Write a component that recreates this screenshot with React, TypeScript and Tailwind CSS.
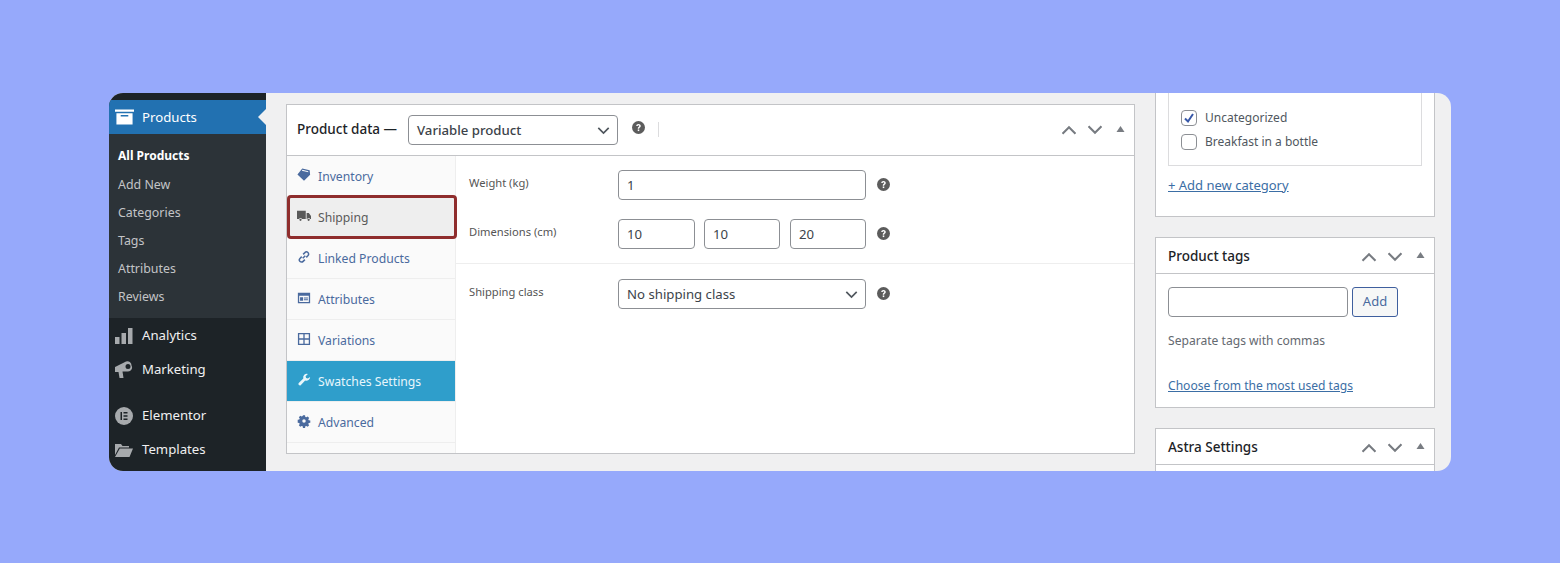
import type { ReactNode } from "react";

const font = { fontFamily: '"Noto Sans", "Open Sans", sans-serif' };

const Chevron = ({ up = false, className = "" }: { up?: boolean; className?: string }) => (
  <svg viewBox="0 0 16 10" className={className} fill="none" stroke="currentColor" strokeWidth={2.1}>
    <path d={up ? "M1.500 8.800 8 2.300l6.500 6.500" : "M1.500 1.200 8 7.700l6.500-6.500"} />
  </svg>
);

const BoxControls = () => (
  <div className="flex items-center text-[#787c82]">
    <Chevron up className="h-[10px] w-[16px]" />
    <Chevron className="ml-[10px] h-[10px] w-[16px]" />
    <svg viewBox="0 0 8 6" className="ml-[13px] mb-[3px] h-[6px] w-[9px]" fill="currentColor">
      <path d="M4 0l4 6H0z" />
    </svg>
  </div>
);

const Help = () => (
  <svg viewBox="0 0 12 12" className="h-[13px] w-[13px]">
    <circle cx="6" cy="6" r="6" fill="#5c5c5c" />
    <path d="M3.900 4.600C3.900 3.400 4.800 2.700 6 2.700s2.100.7 2.100 1.800c0 1.500-1.500 1.400-1.500 2.600H5.300c0-1.800 1.400-1.700 1.400-2.500 0-.4-.3-.7-.7-.7s-.7.3-.8.7z" fill="#fff" />
    <rect x="5.300" y="7.800" width="1.400" height="1.500" fill="#fff" />
  </svg>
);

const tabIcons: Record<string, ReactNode> = {
  Inventory: (
    <path
      fillRule="evenodd"
      d="M6 .5l8.500 2.200.5 5-7 7L.5 7.500zM5.500 3l7.500 1.800-.3-1.200-6.500-1.600z"
    />
  ),
  Shipping: <path d="M0 2h10v9.500H5.700a1.700 1.700 0 0 0-3.300 0H0zM11 4.500h2.500L16 8v3.500h-1a1.700 1.700 0 0 0-3.300 0H11zM4 11a1.300 1.300 0 1 1 0 2.600A1.300 1.300 0 0 1 4 11zM13.300 11a1.300 1.300 0 1 1 0 2.600 1.300 1.300 0 0 1 0-2.600z" />,
  "Linked Products": (
    <path
      fill="none"
      stroke="currentColor"
      strokeWidth={1.7}
      d="M6.500 9.500l3-3M7 5l2-2a2.400 2.400 0 0 1 3.600 3.400l-2 2M9 11l-2 2A2.400 2.400 0 0 1 3.400 9.600l2-2"
    />
  ),
  Attributes: <path fillRule="evenodd" d="M1 2h14v12H1zM2.500 5.500V12.500h11V5.500zM3.500 7h3.500v4H3.500zM8 7.500h4.500v1H8zM8 9.500h4.500v1H8z" />,
  Variations: (
    <path
      fill="none"
      stroke="currentColor"
      strokeWidth={1.500}
      d="M1.800 1.800h12.400v12.400H1.800zM8 1.800v12.400M1.800 8h12.400"
    />
  ),
  "Swatches Settings": <path d="M15 4.500a4.300 4.300 0 0 1-5.700 4L4.500 13.800a1.700 1.700 0 0 1-2.500-2.300l5.200-5.200A4.300 4.300 0 0 1 12.500 1L9.800 3.800l.6 2 2 .5z" />,
  Advanced: (
    <path
      fillRule="evenodd"
      d="M6.800 1.500h2.400l.3 1.800 1.200.5 1.500-1 1.700 1.700-1 1.500.5 1.200 1.800.3v2.400l-1.800.3-.5 1.200 1 1.500-1.700 1.700-1.500-1-1.200.5-.3 1.800H6.800l-.3-1.800-1.200-.5-1.500 1-1.700-1.700 1-1.500-.5-1.200-1.800-.3V6.600l1.800-.3.500-1.200-1-1.500 1.700-1.700 1.500 1 1.200-.5zM8 6a2 2 0 1 0 0 4 2 2 0 0 0 0-4z"
    />
  ),
};

const tabs = ["Inventory", "Shipping", "Linked Products", "Attributes", "Variations", "Swatches Settings", "Advanced"];

const Tab = ({ name }: { name: string }) => {
  const isShipping = name === "Shipping";
  const isActive = name === "Swatches Settings";
  const color = isActive ? "bg-[#2f9ecb] text-[#e8f6fb]" : isShipping ? "bg-[#eeeeee] text-[#5a5a5a]" : "text-[#4a6a9e]";
  return (
    <div className={`relative flex h-[41px] items-center border-b border-[#eeeeee] pl-[10px] text-[12.2px] ${color}`}>
      <svg viewBox="0 0 16 16" fill="currentColor" className="mb-[3px] mr-[7px] h-[14px] w-[14px] shrink-0">
        {tabIcons[name]}
      </svg>
      <span className="pt-[2px]">{name}</span>
      {isShipping && (
        <div className="absolute -right-[2px] -top-[2px] -bottom-[2px] left-0 rounded-[4px] border-[3px] border-[#8f2d2d]" />
      )}
    </div>
  );
};

const Field = ({ className = "", children }: { className?: string; children?: ReactNode }) => (
  <div className={`flex h-[30px] items-center rounded-[4px] border border-[#8c8f94] bg-white px-[8px] pt-[1px] text-[13.2px] text-[#3c434a] ${className}`}>
    {children}
  </div>
);

const SelectField = ({ label, className = "" }: { label: string; className?: string }) => (
  <Field className={`justify-between pr-[7px] ${className}`}>
    <span>{label}</span>
    <Chevron className="h-[8px] w-[13px] text-[#50575e]" />
  </Field>
);

const Row = ({ label, children }: { label: string; children: ReactNode }) => (
  <div className="flex items-center">
    <span className="mb-[3px] w-[149px] text-[11.2px] text-[#555555]">{label}</span>
    <div className="flex w-[248px] gap-[9px]">{children}</div>
    <div className="ml-[11px] mb-[2px] flex">
      <Help />
    </div>
  </div>
);

const navItem = "flex items-center pl-[6px] text-[13.2px] text-[#f0f0f1]";

const Sidebar = () => (
  <aside className="flex w-[157px] shrink-0 flex-col bg-[#1d2327]">
    <div className="h-[7px]" />
    <div className="relative flex h-[34px] items-center bg-[#2271b1] pl-[6px] text-[13.2px] text-white">
      <svg viewBox="0 0 20 16" fill="currentColor" className="mr-[8px] h-[16px] w-[19px]">
        <path fillRule="evenodd" d="M0 0h20v2.500H0zM1.500 4h17v12h-17zM6 6v1.500h8V6z" />
      </svg>
      <span className="pt-[2px]">Products</span>
      <div className="absolute right-0 top-[9px] h-0 w-0 border-y-[8px] border-r-[8px] border-y-transparent border-r-[#f0f0f1]" />
    </div>
    <div className="flex h-[184px] flex-col justify-center bg-[#2c3338] pl-[9px] pt-[2px] text-[12.4px] leading-[28.2px] text-[#c3c4c7]">
      <span className="text-[12px] font-bold text-white">All Products</span>
      <span>Add New</span>
      <span>Categories</span>
      <span>Tags</span>
      <span>Attributes</span>
      <span>Reviews</span>
    </div>
    <div className={`${navItem} mt-[1px] h-[34px]`}>
      <svg viewBox="0 0 18 16" fill="#a7aaad" className="mr-[9px] h-[16px] w-[18px]">
        <path d="M0 9h4.500v7H0zM6.500 5H11v11H6.500zM13 0h4.500v16H13z" />
      </svg>
      <span>Analytics</span>
    </div>
    <div className={`${navItem} h-[34px]`}>
      <svg viewBox="0 0 18 18" fill="#a7aaad" className="mr-[9px] h-[18px] w-[18px]">
        <path fillRule="evenodd" d="M0 6l11-5.500a4 4 0 0 1 5.500 4 4 4 0 0 1-3.500 6L7.500 10.500 8.500 17H4.500L3.500 11H0zM13 3a2.500 2.500 0 0 0 0 5 2.500 2.500 0 0 0 0-5z" />
      </svg>
      <span>Marketing</span>
    </div>
    <div className={`${navItem} mt-[12px] h-[34px]`}>
      <svg viewBox="0 0 18 18" className="mr-[9px] h-[18px] w-[18px]">
        <circle cx="9" cy="9" r="9" fill="#a7aaad" />
        <path fill="#1d2327" d="M5.500 5h1.500v8H5.500zM8.500 5h4v1.500h-4zM8.500 8.250h4v1.500h-4zM8.500 11.500h4V13h-4z" />
      </svg>
      <span>Elementor</span>
    </div>
    <div className={`${navItem} h-[34px]`}>
      <svg viewBox="0 0 18 14" fill="#a7aaad" className="mr-[9px] h-[14px] w-[18px]">
        <path d="M0 1h6l1.500 2H14v1.500H4L0 12zM4.800 5.500H18L14.500 14H0z" />
      </svg>
      <span>Templates</span>
    </div>
  </aside>
);

const ProductData = () => (
  <section className="ml-[20px] mt-[11px] h-[350px] w-[849px] shrink-0 border border-[#c3c4c7] bg-white">
    <header className="flex h-[51px] items-center border-b border-[#c3c4c7] pl-[10px] pr-[9px]">
      <span className="mb-[2px] w-[111px] text-[13.5px] font-medium text-[#1d2327]">Product data —</span>
      <SelectField label="Variable product" className="w-[210px] font-medium" />
      <div className="mb-[6px] ml-[14px] flex">
        <Help />
      </div>
      <div className="mb-[2px] ml-[13px] h-[15px] w-px bg-[#dcdcde]" />
      <div className="ml-auto">
        <BoxControls />
      </div>
    </header>
    <div className="flex h-[297px]">
      <nav className="w-[169px] shrink-0 border-r border-[#eeeeee] bg-[#fafafa]">
        {tabs.map((t) => (
          <Tab key={t} name={t} />
        ))}
      </nav>
      <div className="flex-1 pt-[14px]">
        <div className="flex flex-col gap-[19px] pl-[13px]">
          <Row label="Weight (kg)">
            <Field className="w-full">1</Field>
          </Row>
          <Row label="Dimensions (cm)">
            <Field className="w-[77px]">10</Field>
            <Field className="w-[76px]">10</Field>
            <Field className="ml-[1px] w-[76px]">20</Field>
          </Row>
        </div>
        <div className="mt-[14px] border-t border-[#eeeeee] pl-[13px] pt-[15px]">
          <Row label="Shipping class">
            <SelectField label="No shipping class" className="w-full" />
          </Row>
        </div>
      </div>
    </div>
  </section>
);

const SideBox = ({ title, children }: { title: string; children?: ReactNode }) => (
  <section className="w-[280px] shrink-0 border border-[#c3c4c7] bg-white">
    <header className="flex h-[36px] items-center justify-between border-b border-[#c3c4c7] pl-[12px] pr-[9px] pt-[2px]">
      <span className="text-[13.5px] font-medium text-[#1d2327]">{title}</span>
      <BoxControls />
    </header>
    {children}
  </section>
);

const Check = ({ checked = false }: { checked?: boolean }) => (
  <div className="flex h-[16px] w-[16px] items-center justify-center rounded-[4px] border border-[#8c8f94] bg-white">
    {checked && (
      <svg viewBox="0 0 14 14" className="h-[14px] w-[14px]" fill="none" stroke="#3858a8" strokeWidth={2}>
        <path d="M3 7.500l3 3 5-7.500" />
      </svg>
    )}
  </div>
);

const RightColumn = () => (
  <div className="ml-[20px] flex w-[280px] shrink-0 flex-col gap-[20px]">
    <section className="h-[124px] shrink-0 border-x border-b border-[#c3c4c7] bg-white px-[12px]">
      <div className="flex h-[73px] flex-col gap-[6px] border-x border-b border-[#dcdcde] pl-[12px] pt-[16px] text-[12px] text-[#50575e]">
        <div className="flex items-center gap-[8px]">
          <Check checked />
          <span>Uncategorized</span>
        </div>
        <div className="flex items-center gap-[8px]">
          <Check />
          <span>Breakfast in a bottle</span>
        </div>
      </div>
      <div className="mt-[10px] text-[13px] text-[#3b6ea5] underline">+ Add new category</div>
    </section>
    <SideBox title="Product tags">
      <div className="h-[133px] px-[12px] pt-[13px]">
        <div className="flex gap-[4px]">
          <Field className="w-[180px]" />
          <div className="flex h-[30px] w-[46px] items-center justify-center rounded-[3px] border border-[#3f5f9e] bg-[#f6f7f7] text-[13px] text-[#4a6a9e]">
            Add
          </div>
        </div>
        <p className="mt-[15px] text-[12.1px] leading-[18px] text-[#646970]">Separate tags with commas</p>
        <p className="mt-[27px] text-[12.1px] leading-[18px] text-[#3b6ea5] underline">Choose from the most used tags</p>
      </div>
    </SideBox>
    <SideBox title="Astra Settings">
      <div className="h-[20px]" />
    </SideBox>
  </div>
);

export default function App() {
  return (
    <div className="h-[563px] w-[1560px] overflow-hidden bg-[#96a9fb] pl-[109px] pt-[93px]" style={font}>
      <div className="flex h-[378px] w-[1342px] overflow-hidden rounded-[14px] bg-[#f0f0f1]">
        <Sidebar />
        <ProductData />
        <RightColumn />
      </div>
    </div>
  );
}
